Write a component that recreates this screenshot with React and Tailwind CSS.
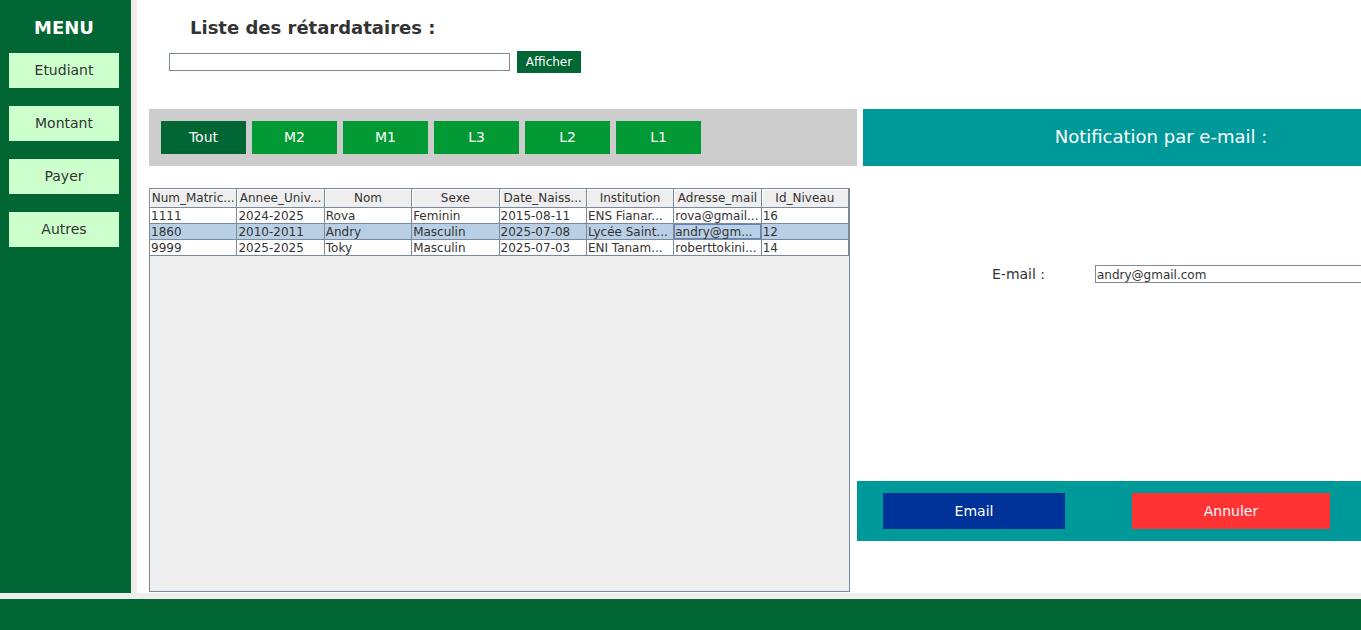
import React, { useState } from "react";

const menuItems = ["Etudiant", "Montant", "Payer", "Autres"];
const levels = ["Tout", "M2", "M1", "L3", "L2", "L1"];
const columns = [
  "Num_Matric...",
  "Annee_Univ...",
  "Nom",
  "Sexe",
  "Date_Naiss...",
  "Institution",
  "Adresse_mail",
  "Id_Niveau",
];
const rows = [
  ["1111", "2024-2025", "Rova", "Feminin", "2015-08-11", "ENS Fianar...", "rova@gmail...", "16"],
  ["1860", "2010-2011", "Andry", "Masculin", "2025-07-08", "Lycée Saint...", "andry@gm...", "12"],
  ["9999", "2025-2025", "Toky", "Masculin", "2025-07-03", "ENI Tanam...", "roberttokini...", "14"],
];

function Sidebar() {
  return (
    <nav className="flex w-[131px] shrink-0 flex-col bg-[#006633] pt-4 pr-3 pl-[9px]">
      <h2 className="text-center text-lg leading-6 font-bold text-white">MENU</h2>
      <div className="mt-[13px] flex flex-col gap-[18px]">
        {menuItems.map((item) => (
          <button key={item} type="button" className="h-[35px] bg-[#ccffcc] pb-0.5 text-sm text-[#333333]">
            {item}
          </button>
        ))}
      </div>
    </nav>
  );
}

function SearchBar() {
  return (
    <header className="h-[109px] pt-4 pl-8">
      <h1 className="pl-[21px] text-lg leading-6 font-bold text-[#333333]">
        Liste des rétardataires :
      </h1>
      <div className="mt-[11px] flex items-center gap-[7px]">
        <input
          type="text"
          aria-label="Rechercher"
          className="h-[18px] w-[341px] border border-[#7a8a99] bg-white px-px text-xs outline-none"
        />
        <button type="button" className="h-[22px] w-16 bg-[#006633] text-xs text-white">
          Afficher
        </button>
      </div>
    </header>
  );
}

function LateTable() {
  return (
    <div className="mt-[22px] mr-[7px] mb-px ml-3 flex-1 border border-[#7a8a99] bg-[#eeeeee]">
      <table className="w-full table-fixed border-separate border-spacing-0 text-xs text-[#333333]">
        <thead>
          <tr>
            {columns.map((name) => (
              <th
                key={name}
                scope="col"
                className="h-[19px] overflow-hidden border-r border-b border-[#7a8a99] p-0 text-center leading-[18px] font-normal whitespace-nowrap shadow-[inset_1px_1px_0_#ffffff]"
              >
                {name}
              </th>
            ))}
          </tr>
        </thead>
        <tbody>
          {rows.map((row, r) => (
            <tr key={row[0]} className={r === 1 ? "bg-[#b8cfe5]" : "bg-white"}>
              {row.map((value, c) => (
                <td
                  key={c}
                  className={
                    "h-4 overflow-hidden border-r border-b border-[#7a8a99] pt-px pr-0 pb-0 pl-px leading-[14px] whitespace-nowrap" +
                    (r === 1 && c === 6 ? " shadow-[inset_0_0_0_1px_#6382bf]" : "")
                  }
                >
                  {value}
                </td>
              ))}
            </tr>
          ))}
        </tbody>
      </table>
    </div>
  );
}

export default function App() {
  const [level, setLevel] = useState("Tout");
  const [email, setEmail] = useState("andry@gmail.com");
  return (
    <div className="flex min-h-screen flex-col gap-1.5 bg-[#eeeeee] font-['DejaVu_Sans',sans-serif]">
      <div className="flex flex-1 gap-1.5">
        <Sidebar />
        <main className="grid flex-1 grid-cols-[720fr_504fr] bg-white">
          <section className="flex min-w-0 flex-col">
            <SearchBar />
            <div className="ml-3 flex gap-1.5 bg-[#cccccc] p-3">
              {levels.map((name) => (
                <button
                  key={name}
                  type="button"
                  onClick={() => setLevel(name)}
                  className={
                    "h-[33px] w-[85px] pb-0.5 text-sm text-white " +
                    (name === level ? "bg-[#006633]" : "bg-[#009933]")
                  }
                >
                  {name}
                </button>
              ))}
            </div>
            <LateTable />
          </section>
          <section className="flex min-w-0 flex-col pt-[109px]">
            <h2 className="ml-1.5 flex h-[57px] items-center justify-center bg-[#009999] pb-0.5 pl-[98px] text-lg font-normal text-white">
              Notification par e-mail :
            </h2>
            <div className="flex h-[315px] items-start pt-[99px] pl-[135px]">
              <label htmlFor="email" className="w-[103px] shrink-0 text-sm leading-[18px] text-[#333333]">
                E-mail :
              </label>
              <input
                id="email"
                type="text"
                value={email}
                onChange={(e) => setEmail(e.target.value)}
                className="h-[18px] min-w-0 flex-1 border border-r-0 border-[#7a8a99] bg-white px-px pt-px text-xs text-[#333333] outline-none"
              />
            </div>
            <div className="flex justify-between bg-[#009999] py-3 pr-[31px] pl-[26px]">
              <button type="button" className="h-9 w-[182px] bg-[#003399] text-sm text-white">
                Email
              </button>
              <button type="button" className="h-9 w-[198px] bg-[#ff3333] text-sm text-white">
                Annuler
              </button>
            </div>
          </section>
        </main>
      </div>
      <footer className="h-[31px] bg-[#006633]" />
    </div>
  );
}
